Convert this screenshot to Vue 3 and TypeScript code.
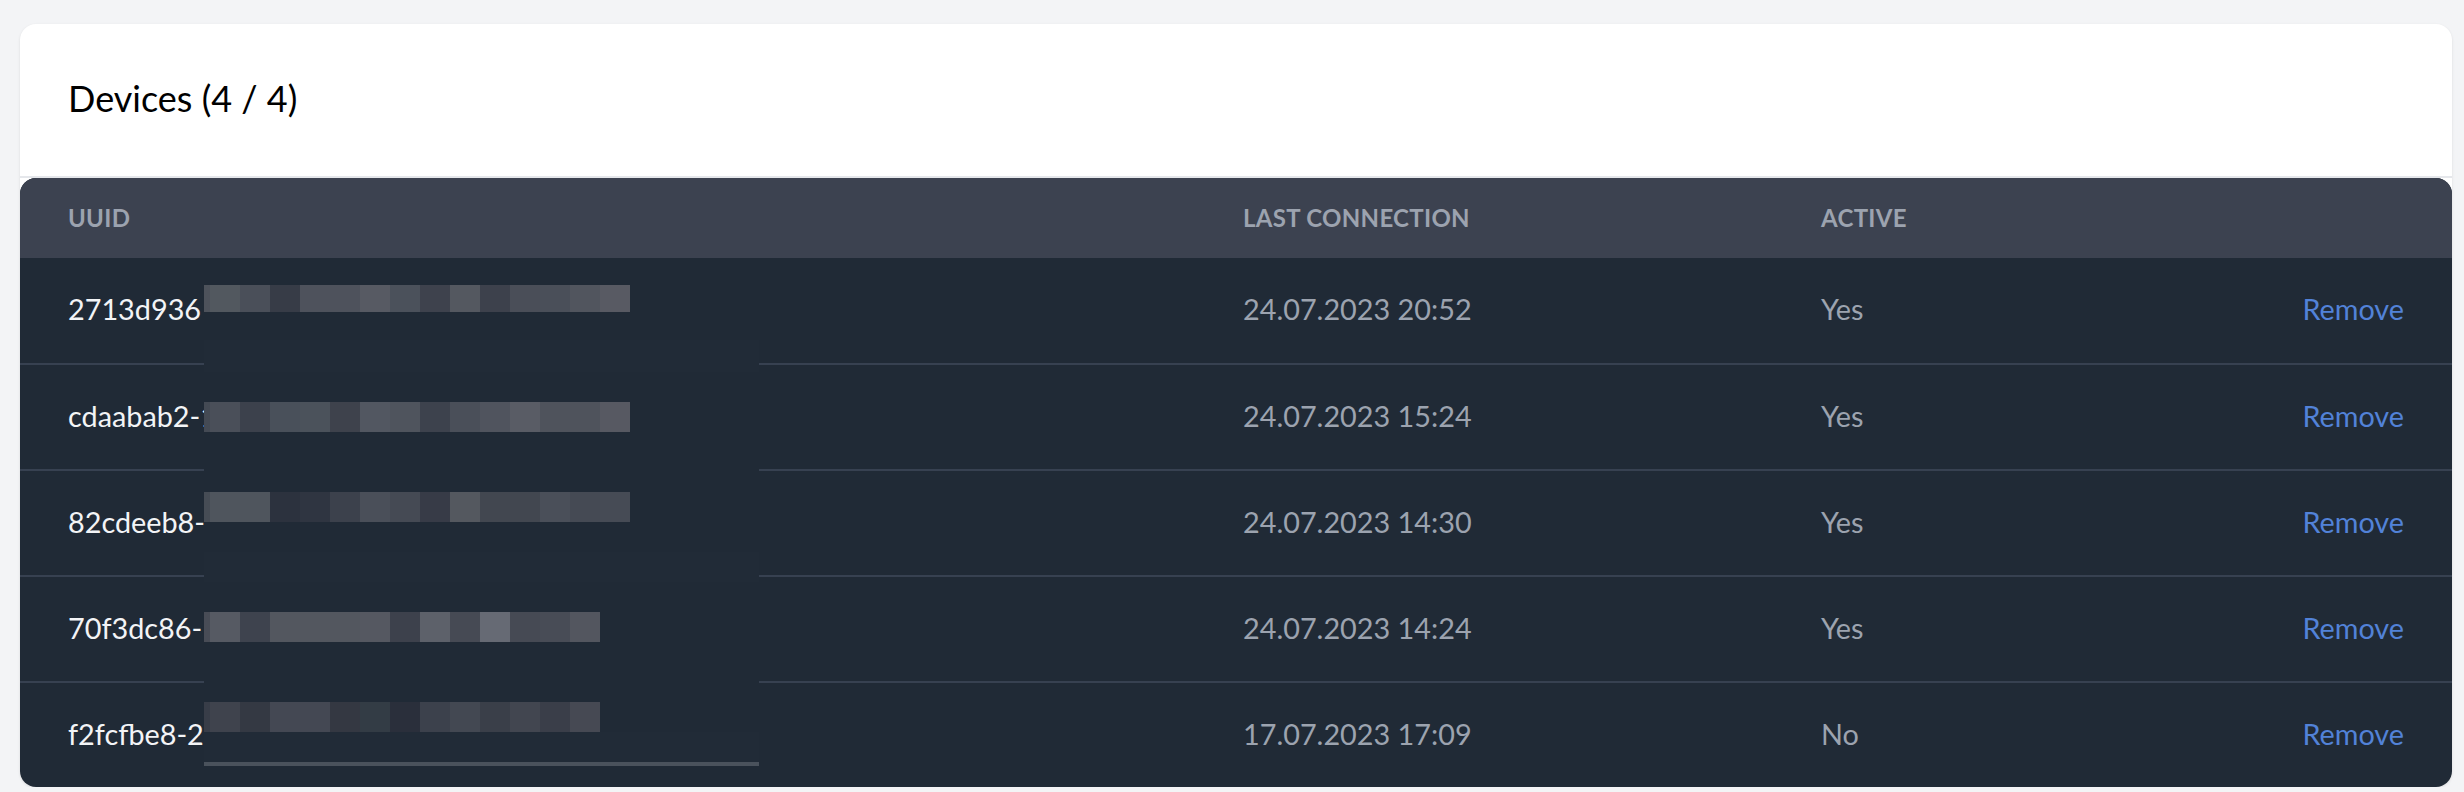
<script setup lang="ts">
interface Device {
  uuid: string
  lastConnection: string
  active: string
}

const devices: Device[] = [
  { uuid: '2713d936', lastConnection: '24.07.2023 20:52', active: 'Yes' },
  { uuid: 'cdaabab2-1', lastConnection: '24.07.2023 15:24', active: 'Yes' },
  { uuid: '82cdeeb8-', lastConnection: '24.07.2023 14:30', active: 'Yes' },
  { uuid: '70f3dc86-', lastConnection: '24.07.2023 14:24', active: 'Yes' },
  { uuid: 'f2fcfbe8-2d', lastConnection: '17.07.2023 17:09', active: 'No' },
]

// blurred uuid tails: offset from the previous bar, bar height, cell colours
const blurRows = [
  { gap: 0, height: 27, sliver: '#4d525b', cells: ['#52585f', '#4a4f59', '#373c47', '#4e525c', '#4e525c', '#575a63', '#4b515b', '#3e424d', '#545860', '#3d414c', '#4a4e58', '#4a4f59', '#51555e', '#585a63'] },
  { gap: 90, height: 30, sliver: '#444a54', cells: ['#4a4f59', '#3c414c', '#49505a', '#4b525b', '#3e424c', '#525761', '#4f545d', '#3d424d', '#4a4f59', '#50545e', '#595c65', '#4f535c', '#4f535c', '#575962'] },
  { gap: 60, height: 30, sliver: '#464c55', cells: ['#4f555d', '#4f555d', '#2c323e', '#2f3541', '#3c414c', '#4a4f59', '#454a54', '#373b47', '#54585f', '#424750', '#424750', '#4a4f59', '#454a54', '#464b55'] },
  { gap: 90, height: 30, sliver: '#484c56', cells: ['#565a63', '#3e434e', '#53575f', '#53575f', '#53575f', '#555861', '#3d414c', '#5d616a', '#464a54', '#666a74', '#464a54', '#484c56', '#53565f'] },
  { gap: 60, height: 30, sliver: '#383d48', cells: ['#3f434d', '#343943', '#444853', '#444853', '#343842', '#333c45', '#2a2f3b', '#3c414c', '#434852', '#3a3f49', '#424650', '#3a3e49', '#464953'] },
]
</script>

<template>
  <div class="page">
    <section class="card">
      <header class="card-head">
        <h2 class="card-title">Devices (4 / 4)</h2>
      </header>
      <div class="table-wrap">
        <table class="devices">
          <colgroup>
            <col class="col-uuid" />
            <col class="col-last" />
            <col class="col-active" />
            <col />
          </colgroup>
          <thead>
            <tr>
              <th>UUID</th>
              <th>Last connection</th>
              <th>Active</th>
              <th></th>
            </tr>
          </thead>
          <tbody>
            <tr v-for="device in devices" :key="device.uuid">
              <td class="uuid">{{ device.uuid }}</td>
              <td>{{ device.lastConnection }}</td>
              <td>{{ device.active }}</td>
              <td class="actions"><a class="remove" href="#">Remove</a></td>
            </tr>
          </tbody>
        </table>
        <div class="redaction">
          <div
            v-for="(row, i) in blurRows"
            :key="i"
            class="blur-row"
            :style="{ marginTop: `${row.gap}px`, height: `${row.height}px` }"
          >
            <span class="blur-sliver" :style="{ background: row.sliver }"></span>
            <span
              v-for="(cell, j) in row.cells"
              :key="j"
              class="blur-cell"
              :style="{ background: cell }"
            ></span>
          </div>
          <div class="redaction-line"></div>
        </div>
      </div>
    </section>
  </div>
</template>

<style scoped>
.page {
  padding: 24px 12px 0 20px;
  font-family: Lato, "Noto Sans", sans-serif;
}

.card {
  border-radius: 16px;
  background: #fff;
  box-shadow: 0 1px 3px rgba(0, 0, 0, 0.1);
}

.card-head {
  display: flex;
  align-items: center;
  height: 154px;
  padding: 0 48px 4px;
  box-sizing: border-box;
  border-bottom: 2px solid #e5e7eb;
}

.card-title {
  margin: 0;
  font-size: 36px;
  font-weight: 400;
  color: #000;
}

.table-wrap {
  position: relative;
  overflow: hidden;
  border-radius: 16px;
  background: #202a36;
}

.devices {
  width: 100%;
  table-layout: fixed;
  border-collapse: collapse;
  font-size: 28.8px;
}

.col-uuid {
  width: 1175px;
}

.col-last {
  width: 578px;
}

.col-active {
  width: 450px;
}

th {
  height: 80px;
  padding: 0 48px 2px;
  box-sizing: border-box;
  background: #3c4250;
  color: #9ca3af;
  font-size: 24px;
  font-weight: 700;
  letter-spacing: 0.3px;
  text-align: left;
  text-transform: uppercase;
}

td {
  height: 106px;
  padding: 0 48px 3px;
  box-sizing: border-box;
  border-bottom: 2px solid #374151;
  color: #9ca3af;
  white-space: nowrap;
}

tbody tr:last-child td {
  height: 105px;
  border-bottom: 0;
}

.uuid {
  color: #f3f4f6;
}

.actions {
  text-align: right;
}

.remove {
  color: #5282d8;
  text-decoration: none;
}

/* faint lighter bands left behind by the blur, on the row colour */
.redaction {
  position: absolute;
  top: 107px;
  left: 184px;
  display: flex;
  flex-direction: column;
  width: 555px;
  height: 481px;
  background: linear-gradient(
    to bottom,
    #202a36 55px,
    #212b37 55px,
    #212b37 87px,
    #202a36 87px,
    #202a36 267px,
    #212b37 267px,
    #212b37 297px,
    #202a36 297px,
    #202a36 447px,
    #212b37 447px
  );
}

.blur-row {
  display: flex;
  flex: none;
}

.blur-sliver {
  flex: none;
  width: 6px;
}

.blur-cell {
  flex: none;
  width: 30px;
}

.redaction-line {
  flex: none;
  height: 4px;
  margin-top: 30px;
  background: #4a525c;
}
</style>

<style>
body {
  background: #f3f4f6;
}
</style>
